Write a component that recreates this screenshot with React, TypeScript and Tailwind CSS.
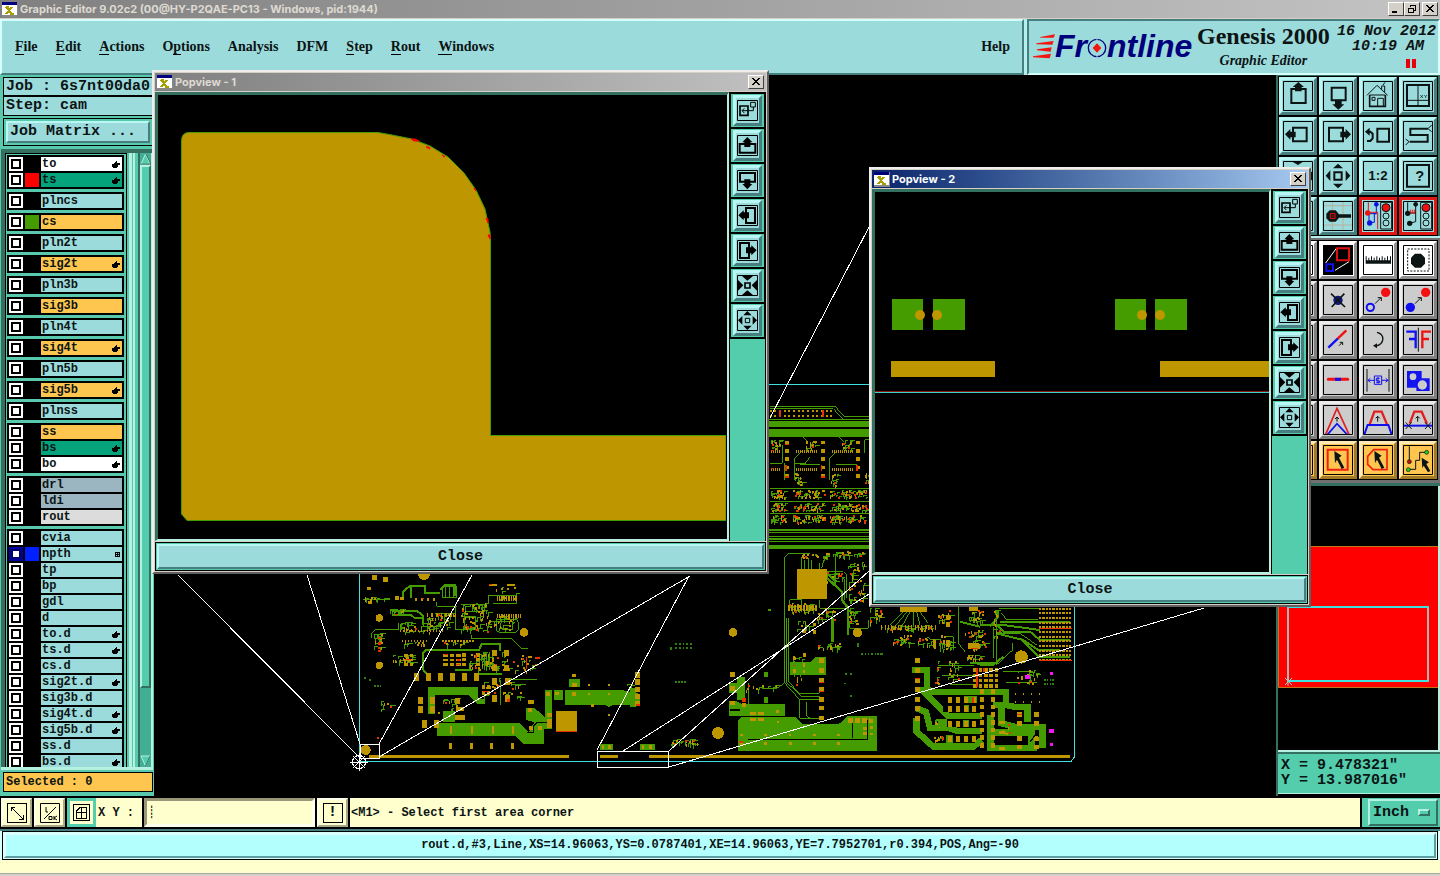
import React, { ReactNode } from "react";

const MONO = "font-['Liberation_Mono',monospace]";
const SERIF = "font-['Liberation_Serif',serif]";
const GREEN = "#459c00";
const GOLD = "#bd9600";
const AQUA = "bg-[#9cdbdc] border-t-[#b9f7f4] border-l-[#b9f7f4] border-b-[#477f80] border-r-[#477f80]";

/* ---------- title bars ---------- */

function AppIcon() {
  return (
    <svg className="h-4 w-4 shrink-0" viewBox="0 0 16 16" shapeRendering="crispEdges">
      <rect width="16" height="15" y="1" fill="#888" />
      <rect width="15" height="13" y="1" fill="#fff" />
      <rect width="15" height="3" y="1" fill="#00007c" />
      <path d="M4 6l6 7M10 6l-6 7M4 6h3M8 13h4" stroke="#a8a000" strokeWidth="2" />
    </svg>
  );
}

function WinButton({ label, children }: { label: string; children: ReactNode }) {
  return (
    <button
      type="button"
      aria-label={label}
      className="flex h-[14px] w-4 items-center justify-center border border-t-white border-l-white border-r-[#404040] border-b-[#404040] bg-[#d4d0c8]"
    >
      <svg className="h-[10px] w-[12px]" viewBox="0 0 12 10" fill="none" stroke="#000" shapeRendering="crispEdges">
        {children}
      </svg>
    </button>
  );
}

const CloseGlyph = <path d="M2 1l7 7M3 1l7 7M9 1l-7 7M10 1l-7 7" />;

/* ---------- header ---------- */

const MENUS: [string, string, string][] = [
  ["", "F", "ile"],
  ["", "E", "dit"],
  ["", "A", "ctions"],
  ["O", "p", "tions"],
  ["Analysis", "", ""],
  ["DFM", "", ""],
  ["", "S", "tep"],
  ["", "R", "out"],
  ["", "W", "indows"],
];

function Header() {
  return (
    <header className="flex h-14 bg-[#b5f0ee]">
      <nav
        className={`${SERIF} flex flex-1 items-center gap-[18px] border-2 border-t-[#d5fffb] border-l-[#d5fffb] border-r-[#477f80] border-b-[#477f80] bg-[#9cdbdc] pr-3 pl-[13px] text-[14px] font-bold`}
      >
        {MENUS.map(([a, b, c]) => (
          <button type="button" key={a + b + c} className="leading-5">
            {a}
            <span className="border-b border-black">{b}</span>
            {c}
          </button>
        ))}
        <button type="button" className="ml-auto leading-5">
          Help
        </button>
      </nav>
      <div className="ml-[3px] flex w-[413px] border-2 border-t-[#477f80] border-l-[#477f80] border-r-[#d5fffb] border-b-[#d5fffb] bg-[#9cdbdc] pl-1">
        <div className="flex h-[50px] items-center">
          <svg className="h-[26px] w-[22px]" viewBox="0 0 66 78" fill="#f4160e">
            <path d="M22 12L66 4 62 14 22 14ZM10 31L62 24 58 35 10 34ZM12 49L56 43 53 56 12 52ZM0 70L54 62 50 76 0 73Z" />
          </svg>
          <div className="flex items-baseline font-['Liberation_Sans',sans-serif] text-[32px] leading-[50px] font-bold text-[#00007c] italic">
            Fr
            <svg className="-mb-[2px] h-[22px] w-5 self-center" viewBox="0 0 60 66" role="img" aria-label="o">
              <circle cx="30" cy="36" r="26" fill="none" stroke="#00007c" strokeWidth="4" />
              <path d="M30 22L43 36 30 50 17 36Z" fill="#f4160e" />
              <path d="M30 4v12M30 56v10" stroke="#9cdbdc" strokeWidth="3" />
            </svg>
            ntline
          </div>
        </div>
        <div className={`${SERIF} ml-px flex w-[140px] flex-col items-center font-bold`}>
          <span className="text-[24px] leading-[30px] whitespace-nowrap">Genesis 2000</span>
          <span className="mt-[2px] text-[14px] leading-4 italic">Graphic Editor</span>
        </div>
        <div className={`${MONO} flex-1 pt-[3px] pr-[2px] text-right text-[15px] leading-[15px] font-bold whitespace-nowrap italic`}>
          <div>16 Nov 2012</div>
          <div className="pr-3">10:19 AM</div>
          <div className="mt-[5px] flex justify-end gap-[2px] pr-5">
            <span className="h-[9px] w-[4px] bg-red-600" />
            <span className="h-[9px] w-[4px] bg-red-600" />
          </div>
        </div>
      </div>
    </header>
  );
}

/* ---------- layer list ---------- */

type Layer = { name: string; bg?: string; swatch?: string; mark?: "hand" | "grid"; on?: boolean };
const ORANGE = "bg-[#fec64f]";
const LAYERS: Layer[][] = [
  [
    { name: "to", bg: "bg-white", mark: "hand" },
    { name: "ts", bg: "bg-[#05a37c]", swatch: "bg-[#ff0000]", mark: "hand" },
  ],
  [{ name: "plncs" }],
  [{ name: "cs", bg: ORANGE, swatch: "bg-[#459c00]" }],
  [{ name: "pln2t" }],
  [{ name: "sig2t", bg: ORANGE, mark: "hand" }],
  [{ name: "pln3b" }],
  [{ name: "sig3b", bg: ORANGE }],
  [{ name: "pln4t" }],
  [{ name: "sig4t", bg: ORANGE, mark: "hand" }],
  [{ name: "pln5b" }],
  [{ name: "sig5b", bg: ORANGE, mark: "hand" }],
  [{ name: "plnss" }],
  [
    { name: "ss", bg: ORANGE },
    { name: "bs", bg: "bg-[#05a37c]", mark: "hand" },
    { name: "bo", bg: "bg-white", mark: "hand" },
  ],
  [
    { name: "drl", bg: "bg-[#9bb6c0]" },
    { name: "ldi", bg: "bg-[#9bb6c0]" },
    { name: "rout", bg: "bg-[#dcdcdc]" },
  ],
  [
    { name: "cvia" },
    { name: "npth", swatch: "bg-[#0020ff]", mark: "grid", on: true },
    { name: "tp" },
    { name: "bp" },
    { name: "gdl" },
    { name: "d" },
    { name: "to.d", mark: "hand" },
    { name: "ts.d", mark: "hand" },
    { name: "cs.d" },
    { name: "sig2t.d", mark: "hand" },
    { name: "sig3b.d" },
    { name: "sig4t.d", mark: "hand" },
    { name: "sig5b.d", mark: "hand" },
    { name: "ss.d" },
    { name: "bs.d", mark: "hand" },
  ],
];

function LayerRow({ l }: { l: Layer }) {
  const id = "layer-" + l.name;
  return (
    <div className="flex h-[14px] gap-[2px]">
      <input
        id={id}
        type="checkbox"
        className={`h-[14px] w-[14px] shrink-0 appearance-none outline-2 -outline-offset-4 ${
          l.on ? "border-4 border-[#0000a0] bg-white outline-[#000070]" : "bg-white outline-black"
        }`}
      />
      <span className={`w-[14px] shrink-0 ${l.swatch ?? "bg-black"}`} />
      <label
        htmlFor={id}
        className={`${MONO} flex flex-1 items-center justify-between pr-[2px] pl-[1px] text-[12px] leading-[14px] font-bold ${l.bg ?? "bg-[#9cdbdc]"}`}
      >
        {l.name}
        {l.mark === "hand" && (
          <svg className="mt-[2px] h-2 w-2" viewBox="0 0 8 8" shapeRendering="crispEdges">
            <path d="M4 0h1v2h3v2h-2v2h-1v1h-4v-1h-1v-3h2v-1h1v-1h1z" />
          </svg>
        )}
        {l.mark === "grid" && (
          <svg className="h-[5px] w-[5px]" viewBox="0 0 5 5" fill="none" stroke="#000" shapeRendering="crispEdges">
            <path d="M.5 .5h4v4h-4zM2.5 0v5M0 2.5h5" />
          </svg>
        )}
      </label>
    </div>
  );
}

function Sidebar() {
  return (
    <aside className="flex w-[154px] shrink-0 flex-col border-x border-[#58c9ac] bg-[#58c9ac] pt-[2px]">
      <div className={`${MONO} ml-[2px] border border-black bg-[#9cdbdc] text-[15px] leading-[18px] font-bold whitespace-nowrap`}>
        <div className="h-[19px] overflow-hidden border-b-2 border-black pl-[2px]">Job : 6s7nt00da0</div>
        <div className="h-[18px] pl-[2px]">Step: cam</div>
      </div>
      <div className="mt-[2px] ml-[2px] flex border border-black p-[2px]">
        <button type="button" className={`${MONO} ${AQUA} h-[22px] w-full border-2 pl-[2px] text-left text-[15px] leading-4 font-bold`}>
          Job Matrix ...
        </button>
      </div>
      <div className="mt-[3px] flex h-[618px] border-t-4 border-[#33705f]">
        <div className="w-[126px] overflow-hidden border-l-4 border-[#33705f]">
          <div className="h-full overflow-hidden border border-b-0 border-black bg-[#58c9ac] pt-px pr-[2px] pl-px">
            <div className="flex flex-col gap-[3px]">
              {LAYERS.map((g) => (
                <div key={g[0].name} className="flex flex-col gap-[2px] bg-black p-[2px]">
                  {g.map((l) => (
                    <LayerRow key={l.name} l={l} />
                  ))}
                </div>
              ))}
            </div>
          </div>
        </div>
        <div className="ml-[2px] w-[3px] bg-[#b5f0e0]" />
        <div className="ml-[1px] w-[2px] bg-[#b5f0e0]" />
        <div className="ml-[3px] flex flex-1 flex-col border-l-2 border-r-2 border-l-[#33705f] border-r-[#b5f0e0] bg-[#42ae94]">
          <svg className="h-3 w-[11px]" viewBox="0 0 11 12">
            <path d="M5.500 1L10 11H1Z" fill="#53cdac" stroke="#b5f0e0" />
            <path d="M6 1l5 10H1" stroke="#33705f" fill="none" />
          </svg>
          <div className="h-[523px] border-2 border-t-[#b5f0e0] border-l-[#b5f0e0] border-r-[#33705f] border-b-[#33705f] bg-[#53cdac]" />
          <svg className="mt-auto h-3 w-[11px]" viewBox="0 0 11 12">
            <path d="M1 1H10L5.500 11Z" fill="#53cdac" stroke="#b5f0e0" />
            <path d="M10 1L5.500 11" stroke="#33705f" fill="none" />
          </svg>
        </div>
      </div>
      <div className="h-[3px] bg-[#b5f0e0]" />
      <div className={`${MONO} mt-[2px] ml-[2px] h-5 border border-black bg-[#fec64f] pl-[2px] text-[12px] leading-[18px] font-bold`}>
        Selected : 0
      </div>
    </aside>
  );
}

/* ---------- board drawing ---------- */

type Region = [x: number, y: number, w: number, h: number, n: number];

function makeRandom(seed: number) {
  let s = seed;
  return () => {
    s = (s * 1103515245 + 12345) % 2147483648;
    return s / 2147483648;
  };
}

/* Small pads and stub traces on a three-unit grid. */
function Scatter({ seed, regions, red = 0.12, stub = 5 }: { seed: number; regions: Region[]; red?: number; stub?: number }) {
  const rnd = makeRandom(seed);
  let g = "";
  let a = "";
  let r = "";
  for (const [x, y, w, h, n] of regions) {
    for (let i = 0; i < n; i++) {
      const px = x + Math.floor((rnd() * w) / 3) * 3;
      const py = y + Math.floor((rnd() * h) / 3) * 3;
      const k = rnd();
      if (k < 0.48) {
        const lx = 6 + Math.floor(rnd() * stub) * 3;
        const ly = 3 + Math.floor(rnd() * (stub - 1)) * 3;
        g += `M${px} ${py}h${lx}v3h${-(lx - 3)}v${ly}h-3z`;
      } else if (k < 1 - red) {
        const pw = rnd() < 0.5 ? 3 : 6;
        a += `M${px} ${py}h${pw}v${pw === 3 ? 9 : 6}h${-pw}z`;
      } else {
        r += `M${px} ${py}h6v6h-6z`;
      }
    }
  }
  return (
    <>
      <path d={g} fill={GREEN} />
      <path d={a} fill={GOLD} />
      <path d={r} fill="#e03800" />
    </>
  );
}

type Pad = [x: number, y: number, w: number, h: number];
function Pads({ list, fill = GOLD }: { list: Pad[]; fill?: string }) {
  return <path fill={fill} d={list.map(([x, y, w, h]) => `M${x} ${y}h${w}v${h}h${-w}z`).join("")} />;
}
function grid(x: number, y: number, nx: number, ny: number, dx: number, dy: number, w: number, h: number): Pad[] {
  const out: Pad[] = [];
  for (let j = 0; j < ny; j++) for (let i = 0; i < nx; i++) out.push([x + i * dx, y + j * dy, w, h]);
  return out;
}
function Holes({ list, fill = GOLD }: { list: [number, number, number][]; fill?: string }) {
  return (
    <g fill={fill}>
      {list.map(([x, y, r]) => (
        <circle key={x + "-" + y} cx={x} cy={y} r={r} />
      ))}
    </g>
  );
}

function LowerLeft() {
  return (
    <g transform="translate(355 570) scale(0.33333)">
      <g fill="none" stroke={GREEN} strokeWidth="6">
        <path d="M145 82V64L165 48H210V70H256M168 50V84M256 60L270 46H300V78M110 122H185L205 138V165M110 136H170L180 145H200" />
        <path d="M204 300V250L214 240H372L380 222H436V244M300 300H345V285M205 300L222 320M372 312H440" />
      </g>
      <g fill="none" stroke={GREEN} strokeWidth="3">
        <path d="M50 205V188L62 179H132V160M245 95V109H305M302 105V180H320M350 195V206H470L500 236H520M25 88H105M318 105H390V125H330V178H362V140H318M400 100V78H486V102H415M424 145V180L434 189H480L492 178V160L484 148H424M434 156H474V178H440Z" />
        <path d="M262 50H306V82H262ZM272 50V80M284 50V80M296 50V80M240 132H300M252 132V150M270 132V152M288 132V150M330 142H362V176H330Z" />
        <path d="M436 330V405M450 330H545M470 345H512M388 250V300M396 246V304M404 246V300M412 250V300" />
      </g>
      <Scatter
        seed={11}
        red={0.05}
        regions={[
          [318, 100, 90, 85, 84],
          [418, 135, 65, 50, 24],
          [420, 50, 65, 40, 12],
          [135, 155, 110, 35, 34],
          [105, 115, 50, 20, 10],
          [140, 215, 80, 8, 10],
          [260, 215, 80, 8, 10],
          [110, 255, 70, 25, 24],
          [330, 245, 130, 55, 66],
          [475, 255, 60, 50, 18],
          [380, 325, 115, 60, 28],
          [245, 378, 70, 70, 20],
          [25, 80, 68, 9, 12],
          [58, 190, 26, 45, 20],
          [75, 390, 35, 30, 8],
          [800, 340, 30, 70, 10],
          [215, 130, 80, 45, 34],
        ]}
      />
      <g fill={GREEN}>
        <path d="M218 350H370V384L390 388V402H366L340 376H240V432H218Z" />
        <path d="M245 460H495L522 487L538 456 513 450V413H538L568 440H592V478H567V521H505L480 498H245Z" />
        <path d="M571 360H591V440H571ZM597 360H625V390H597ZM630 360H800L855 372V405H775L762 411 750 405H630ZM642 327H676V352H642ZM265 424H300V456H265ZM255 470H300V480H255Z" />
        <path d="M736 522H774V539H736ZM855 522H900V539H855Z" />
      </g>
      <path d="M515 487H535V468L545 458H575" fill="none" stroke="#000" strokeWidth="4" />
      <Pads
        list={[
          ...grid(214, 310, 5, 1, 36, 0, 14, 24),
          [178, 310, 14, 22],
          [136, 82, 12, 8],
          ...grid(180, 84, 4, 1, 18, 0, 6, 8),
          ...grid(425, 78, 9, 1, 7, 0, 4, 14),
          ...grid(425, 132, 11, 1, 7, 0, 4, 12),
          ...grid(215, 128, 7, 1, 14, 0, 5, 14),
          ...grid(135, 180, 15, 1, 9, 0, 4, 7),
          ...grid(140, 210, 9, 1, 9, 0, 4, 6),
          ...grid(262, 210, 11, 1, 9, 0, 4, 6),
          ...grid(264, 252, 3, 3, 20, 14, 14, 8),
          ...grid(148, 252, 2, 3, 16, 14, 10, 8),
          ...grid(320, 250, 2, 3, 42, 14, 12, 10),
          ...grid(382, 344, 2, 2, 15, 18, 9, 12),
          ...grid(412, 240, 2, 2, 36, 45, 14, 18),
          ...grid(410, 324, 2, 2, 40, 52, 16, 20),
          [190, 380, 14, 22], [190, 408, 14, 22], [225, 382, 14, 20], [225, 408, 14, 22],
          [202, 450, 13, 24], [238, 449, 14, 24], [300, 385, 14, 16], [300, 436, 30, 14], [302, 410, 24, 14],
          ...grid(286, 467, 4, 1, 62, 0, 6, 24),
          ...grid(282, 520, 4, 1, 62, 0, 9, 18),
          [401, 42, 26, 6], [455, 42, 26, 6], [120, 77, 12, 12], [50, 16, 15, 13], [84, 22, 15, 13],
          [603, 423, 63, 62], [519, 413, 12, 12], [574, 366, 12, 12], [601, 366, 10, 10], [650, 340, 16, 12], [652, 366, 12, 12],
          [698, 342, 6, 6], [698, 368, 6, 6], [759, 342, 6, 6], [759, 368, 6, 6], [759, 432, 6, 6], [709, 402, 8, 10],
          [576, 430, 16, 12], [576, 447, 16, 28], [522, 467, 12, 12], [549, 467, 12, 12],
          ...grid(840, 308, 1, 5, 0, 21, 15, 15),
          [740, 524, 8, 12], [760, 524, 8, 12], [860, 524, 8, 12], [882, 524, 8, 12],
          [519, 390, 17, 11], [652, 312, 10, 8], [36, 50, 12, 9], [40, 92, 10, 9],
          [735, 555, 54, 9], [882, 555, 20, 9],
        ]}
      />
      <Pads
        fill="#e83000"
        list={[
          [603, 482, 63, 3], [65, 500, 8, 8], [70, 200, 8, 8], [70, 216, 8, 8], [70, 240, 8, 6],
          [149, 266, 18, 5], [266, 252, 12, 4], [305, 266, 10, 6], [302, 282, 12, 4], [360, 254, 6, 10],
          [512, 262, 4, 36], [540, 262, 14, 4], [540, 282, 12, 4], [385, 362, 14, 4], [455, 388, 10, 8],
          [120, 132, 10, 4], [842, 402, 12, 5], [250, 132, 6, 6], [402, 42, 10, 3], [200, 84, 6, 4],
        ]}
      />
      <Holes list={[[73, 144, 11], [73, 286, 11], [507, 187, 13], [207, 12, 18], [32, 540, 15]]} />
      <Pads fill="#387818" list={[[27, 322, 5, 5], [42, 328, 5, 5], [58, 346, 5, 5], [66, 346, 5, 5], [74, 346, 5, 5]]} />
    </g>
  );
}

function MiddleBoard() {
  return (
    <g transform="translate(630 540) scale(0.33333)">
      <g fill="none" stroke={GREEN} strokeWidth="3">
        <path d="M540 42H474L465 50V430L510 480H570M470 235V428L508 462H565L580 448M477 235V425L515 470H570M510 480V535H570M530 485V528L540 535" />
        <path d="M515 50V86M525 60V86M535 55V86M545 60V86M570 70V86M582 60L575 84M616 45V120M590 95H640L650 105V175M592 105H630L645 120V180M480 200V180H500L515 178V215M570 180V205H650M395 445H440L462 430M660 265H715V240M355 430V500" />
      </g>
      <g fill="none" stroke={GREEN} strokeWidth="7">
        <path d="M592 115L636 155V180L655 205V285M608 235V305M590 100L620 125" />
      </g>
      <Scatter
        seed={23}
        red={0.12}
        regions={[
          [515, 38, 80, 15, 20],
          [610, 32, 90, 14, 24],
          [475, 190, 85, 30, 36],
          [590, 95, 50, 30, 16],
          [560, 205, 60, 40, 24],
          [655, 65, 50, 120, 48],
          [655, 205, 30, 50, 20],
          [565, 305, 70, 20, 20],
          [500, 240, 50, 30, 8],
          [345, 432, 100, 20, 12],
          [122, 598, 80, 18, 26],
          [485, 345, 40, 90, 16],
          [660, 560, 50, 25, 6],
        ]}
      />
      <g fill={GREEN}>
        <path d="M480 366H540L556 352H588V404H480ZM297 484H320L335 492H465V528H297ZM320 410H345V480H320ZM297 430H320V460H297Z" />
        <path d="M334 531H495L515 551H628L652 528H741V633H324V540Z" />
        <path d="M402 396H414V410H402ZM402 471H414V488H402ZM30 612H72V629H30ZM0 445H18V500H0ZM414 207H423V213H414Z" />
      </g>
      <path d="M355 598H712V540M668 545V595M330 510H300" fill="none" stroke="#000" strokeWidth="4" />
      <Pads fill="#308010" list={[...grid(136, 310, 5, 2, 11, 12, 5, 5), ...grid(136, 424, 4, 1, 9, 0, 5, 4), ...grid(694, 340, 7, 1, 10, 0, 4, 4), [120, 320, 5, 10], [646, 400, 6, 5], [660, 400, 6, 5], [643, 428, 6, 5], [660, 466, 6, 5], [680, 310, 6, 10]]} />
      <Pads
        list={[
          [501, 87, 90, 90],
          [567, 353, 15, 15], [567, 383, 15, 15], [567, 413, 15, 15], [567, 440, 15, 15], [567, 471, 15, 15], [567, 498, 15, 13], [567, 528, 15, 13],
          [300, 396, 15, 14], [300, 438, 15, 14], [300, 482, 15, 14], [337, 490, 10, 12],
          [360, 515, 18, 10], [385, 515, 18, 10], [360, 534, 18, 10], [385, 534, 18, 10], [438, 510, 9, 9], [440, 543, 7, 6],
          ...grid(330, 581, 5, 1, 73, 0, 8, 7),
          ...grid(330, 606, 5, 1, 73, 0, 9, 9),
          ...grid(654, 534, 4, 1, 21, 0, 14, 15),
          ...grid(700, 562, 2, 2, 20, 15, 11, 9),
          [519, 340, 8, 10], [488, 350, 10, 10], [519, 370, 6, 10], [519, 390, 6, 10], [489, 388, 8, 10], [516, 268, 12, 10], [548, 248, 10, 10], [548, 270, 10, 12],
          ...grid(15, 396, 1, 5, 0, 22, 15, 14),
          ...grid(475, 196, 10, 1, 9, 0, 4, 16),
        ]}
      />
      <Pads fill="#e83000" list={[[336, 475, 11, 10], [568, 425, 13, 3], [568, 453, 13, 3], [328, 604, 12, 4], [488, 375, 8, 4], [15, 490, 15, 5]]} />
      <Holes list={[[309, 277, 13], [682, 278, 14], [264, 579, 18]]} />
    </g>
  );
}

function RightBoard() {
  return (
    <g transform="translate(870 590) scale(0.33333)">
      <g fill="none" stroke={GREEN} strokeWidth="3">
        <path d="M265 52V160L285 185M380 60V225M372 110V205M388 55H510M395 70L410 90H505M385 130H450L500 165M428 160V180L385 220M400 245H490V262M408 278H500M205 228H312M215 257H310M240 285H310M330 228H372" />
        <path d="M100 66L60 105M110 66L75 110M120 66L95 110M130 66V110M140 66L150 105M150 66L175 100M170 140L185 150H212V185M228 140H250V180" />
      </g>
      <g fill="none" stroke={GREEN} strokeWidth="6">
        <path d="M330 105H400L510 120M390 95H600M380 130L460 150L505 180H570M360 110L385 80V60M270 95L330 110M320 222H372L400 200M385 110L400 125H480L510 150H600M300 218H385M450 145L505 200H600" />
      </g>
      <g fill="none" stroke={GREEN} strokeWidth="19">
        <path d="M127 240H172V298L190 307H408V345L440 352H473V395" />
        <path d="M140 300H155L235 378H335M140 355L168 366 180 415H240L262 423H335M140 385V425L190 470H310L335 450M368 345H395V400L440 412H518V474M362 375V474H500M368 428H485V470" />
      </g>
      <Scatter
        seed={37}
        red={0.08}
        regions={[
          [0, 52, 36, 55, 20],
          [32, 104, 155, 16, 44],
          [62, 135, 60, 28, 22],
          [145, 145, 50, 30, 18],
          [205, 135, 40, 45, 18],
          [200, 60, 45, 40, 14],
          [290, 55, 50, 40, 24],
          [285, 120, 60, 20, 20],
          [285, 195, 50, 15, 20],
          [300, 150, 50, 30, 20],
          [195, 210, 12, 70, 10],
          [230, 210, 36, 70, 18],
          [190, 388, 30, 20, 12],
          [190, 435, 30, 18, 12],
          [430, 240, 75, 40, 20],
          [370, 60, 20, 80, 14],
          [395, 385, 24, 70, 8],
        ]}
      />
      <Pads fill="#000" list={[[220, 325, 100, 42], [222, 390, 94, 22], [222, 436, 94, 22]]} />
      <Pads
        fill={GREEN}
        list={[[282, 318, 40, 22], [282, 345, 14, 22], [205, 388, 25, 22], [228, 435, 20, 26], [278, 390, 18, 20]]}
      />
      <Pads
        list={[
          [90, 52, 80, 14],
          ...grid(507, 53, 10, 12, 10, 14, 7, 6),
          ...grid(310, 235, 5, 4, 16, 16, 11, 10),
          ...grid(330, 298, 2, 8, 32, 23, 12, 14),
          ...grid(234, 322, 4, 1, 24, 0, 11, 16),
          ...grid(234, 348, 4, 1, 24, 0, 11, 17),
          ...grid(234, 392, 4, 1, 24, 0, 11, 18),
          ...grid(234, 438, 4, 1, 24, 0, 11, 18),
          [135, 205, 15, 13], [135, 234, 15, 14], [135, 264, 15, 14], [135, 290, 15, 15], [135, 322, 15, 13], [135, 348, 15, 14], [135, 377, 15, 15],
          [441, 366, 15, 14], [492, 366, 15, 14], [441, 393, 15, 14], [492, 393, 15, 14], [441, 438, 15, 14], [492, 438, 15, 14], [441, 464, 15, 12], [492, 464, 15, 14],
          [388, 392, 18, 10], [388, 422, 18, 10], [388, 470, 18, 9],
          ...grid(434, 308, 4, 2, 24, 25, 5, 6),
          ...grid(34, 104, 17, 1, 10, 0, 3, 16),
          [228, 75, 11, 14], [228, 97, 11, 14], [203, 75, 8, 10], [229, 150, 10, 22], [190, 150, 8, 22],
          [295, 158, 32, 20], [296, 52, 28, 12],
        ]}
      />
      <path d="M480 455L505 425V440" stroke="#000" strokeWidth="4" fill="none" />
      <Pads fill={GREEN} list={[[0, 380, 20, 102]]} />
      <Pads fill={GOLD} list={[[0, 386, 10, 12], [0, 408, 9, 9], [0, 430, 9, 5]]} />
      <Pads fill="#308010" list={[...grid(523, 268, 4, 2, 8, 12, 4, 4), ...grid(6, 190, 4, 1, 8, 0, 4, 4)]} />
      <Pads fill="#e83000" list={[[318, 235, 5, 55], [340, 235, 5, 10], [508, 114, 98, 4], [508, 210, 98, 3], [135, 264, 15, 3], [306, 320, 6, 18], [302, 174, 22, 4], [78, 152, 8, 8], [146, 148, 8, 8], [30, 60, 6, 10], [441, 372, 15, 2]]} />
      <Holes list={[[454, 201, 20]]} />
      <Pads fill="#f318f3" list={[[466, 256, 15, 12], [540, 246, 9, 9], [538, 417, 14, 13], [540, 459, 9, 9]]} />
    </g>
  );
}

const BAND_ROWS = [361, 399, 436];

function UpperBoard() {
  return (
    <g transform="translate(765 370) scale(0.33333)">
      <g fill={GREEN}>
        <path d="M0 153H320V171H0ZM0 178H320V201H0ZM0 525H320V537H0ZM0 477H320V483H0ZM0 487H320V490H0ZM0 497H320V501H0ZM0 505H320V509H0ZM0 513H320V517H0Z" />
      </g>
      <g fill="none" stroke={GREEN} strokeWidth="3">
        <path d="M15 109H210L240 141H320M15 116H205L235 148H320M0 148H235M15 357H320M15 395H320M15 430H320M60 280V330M52 225V280H15M112 200L128 215M220 200L236 215M88 330V265L110 245M106 285H165M195 330V265L215 245M213 285H275M300 250V210H320M90 282H120L135 260" />
      </g>
      <Scatter
        seed={51}
        red={0.05}
        stub={4}
        regions={[
          [15, 210, 30, 28, 16],
          [122, 210, 30, 28, 16],
          [232, 210, 30, 28, 16],
          [90, 310, 24, 40, 16],
          [195, 310, 24, 40, 16],
          [300, 310, 12, 40, 7],
        ]}
      />
      <Scatter
        seed={77}
        red={0.16}
        stub={3}
        regions={BAND_ROWS.flatMap((y): Region[] => [
          [18, y, 45, 24, 26],
          [85, y, 95, 24, 48],
          [195, y, 112, 24, 54],
        ])}
      />
      <Pads
        list={[
          ...grid(42, 121, 12, 2, 14, 13, 6, 6),
          [16, 121, 6, 6], [28, 121, 6, 6], [16, 134, 6, 6], [28, 134, 6, 6],
          ...grid(18, 240, 5, 1, 6, 0, 3, 8), ...grid(92, 240, 11, 1, 6, 0, 3, 8), ...grid(200, 240, 11, 1, 6, 0, 3, 8),
          ...grid(18, 294, 5, 1, 6, 0, 3, 8), ...grid(92, 294, 11, 1, 6, 0, 3, 8), ...grid(200, 294, 11, 1, 6, 0, 3, 8),
          ...grid(60, 212, 3, 5, 107, 25, 12, 11),
        ]}
      />
      <Pads fill="#e83000" list={[[42, 120, 6, 20], [170, 120, 6, 20], [60, 222, 12, 4], [60, 286, 5, 18], [167, 286, 5, 18], [274, 286, 5, 18], [60, 318, 12, 5], [167, 318, 12, 5], [18, 240, 10, 4], [18, 294, 8, 4]]} />
    </g>
  );
}

function Board() {
  return (
    <svg className="h-[721px] w-[1122px]" viewBox="154 75 1122 721" shapeRendering="crispEdges" role="img" aria-label="Board layout">
      <UpperBoard />
      <MiddleBoard />
      <LowerLeft />
      <RightBoard />
      <path d="M369 755H569V758H369ZM649 755H1070V758H649Z" fill={GOLD} />
      <path d="M359.500 384.500H1074.500V757L1071 761.500H359.500Z" fill="none" stroke="#3fe0e0" />
      <g fill="none" stroke="#fff">
        <path d="M178 575L359 757M307 575L360 744M472 575L379 744M690 576L379 757M689 576L597 750M869 571L669 751M869 594L623 751M669 767L1204 608M869 227L770 418" />
        <path d="M360.500 744.500H379.500V758.500H360.500ZM597.500 751.500H668.500V767.500H597.500Z" />
        <circle cx="359" cy="762" r="6.500" />
        <path d="M350 762H368M359 753V771M353 756L365 768M365 756L353 768" />
      </g>
    </svg>
  );
}

/* ---------- toolbar icons, drawn on a 90-unit square ---------- */

const K = "#0c1414";
const tri = {
  up: "M29 18L46 3 63 18H56V31H36V18Z",
  down: "M28 70L46 86 64 70H56V56H36V70Z",
};

function TrafficLight() {
  return (
    <g strokeWidth="3">
      <path d="M53 4H86V84H53Z" stroke={K} fill="none" />
      <circle cx="69" cy="20" r="12" fill="#f01010" stroke={K} />
      <circle cx="69" cy="45" r="9" stroke={K} fill="none" />
      <circle cx="69" cy="66" r="9" stroke={K} fill="none" />
    </g>
  );
}

type Tool = { label: string; tone: "aqua" | "alert" | "white" | "grey" | "orange"; art: ReactNode };

const NAV_TOOLS: Tool[] = [
  { label: "Scroll up", tone: "aqua", art: <><path d="M25 24H68V66H25Z" stroke={K} strokeWidth="6" /><path d={tri.up} fill={K} /></> },
  { label: "Scroll down", tone: "aqua", art: <><path d="M26 20H68V58H26Z" stroke={K} strokeWidth="6" /><path d={tri.down} fill={K} /></> },
  {
    label: "Home",
    tone: "aqua",
    art: (
      <>
        <path d="M20 42V76H67V42" stroke={K} strokeWidth="5" />
        <path d="M12 43L42 13 74 43M20 42H67M44 76V52H61V76M27 49H36V58H27ZM56 25V15H65V33M60 12L66 4" stroke={K} strokeWidth="3" />
      </>
    ),
  },
  {
    label: "XY window",
    tone: "aqua",
    art: (
      <>
        <path d="M12 12H78V75H12Z" stroke={K} strokeWidth="6" />
        <path d="M45 10V74M11 58H78" stroke={K} strokeWidth="3" />
        <path d="M52 42L60 51M60 42L52 51M64 42L68 47 72 42M68 47V51" stroke={K} strokeWidth="2" />
      </>
    ),
  },
  { label: "Scroll left", tone: "aqua", art: <><path d="M30 20H71V61H30Z" stroke={K} strokeWidth="6" /><path d="M6 40L22 24V32H38V49H22V56Z" fill={K} /></> },
  { label: "Scroll right", tone: "aqua", art: <><path d="M18 20H60V61H18Z" stroke={K} strokeWidth="6" /><path d="M84 40L68 24V32H52V49H68V56Z" fill={K} /></> },
  {
    label: "Previous view",
    tone: "aqua",
    art: (
      <>
        <path d="M43 23H78V62H43Z" stroke={K} strokeWidth="6" />
        <path d="M12 60H22L29 52V38L22 32H14" stroke={K} strokeWidth="6" />
        <path d="M6 32L20 20V44Z" fill={K} />
      </>
    ),
  },
  {
    label: "Serpentine",
    tone: "aqua",
    art: (
      <>
        <path d="M76 23H22V42H74V62H20" stroke={K} strokeWidth="6" />
        <path d="M76 22L86 12M76 24L86 32M18 62L8 54M18 62L8 72" stroke={K} strokeWidth="3" />
      </>
    ),
  },
  { label: "Zoom in", tone: "aqua", art: <path d="M28 2H60L45 12ZM2 30L16 45 2 60ZM88 30L74 45 88 60ZM30 88L45 74 60 88Z" fill={K} /> },
  {
    label: "Zoom out",
    tone: "aqua",
    art: (
      <>
        <path d="M34 34H56V56H34Z" stroke={K} strokeWidth="6" />
        <path d="M30 22L45 8 60 22ZM30 68L45 82 60 68ZM22 28V60L8 44ZM68 28V60L82 44Z" fill={K} />
      </>
    ),
  },
  {
    label: "Zoom 1:2",
    tone: "aqua",
    art: (
      <text x="45" y="58" textAnchor="middle" fill={K} fontFamily="Liberation Sans, sans-serif" fontWeight="bold" fontSize="40">
        1:2
      </text>
    ),
  },
  {
    label: "Query",
    tone: "aqua",
    art: (
      <>
        <path d="M12 12H78V77H12Z" stroke={K} strokeWidth="6" />
        <text x="50" y="60" textAnchor="middle" fill={K} fontFamily="Liberation Sans, sans-serif" fontWeight="bold" fontSize="44">
          ?
        </text>
      </>
    ),
  },
  { label: "Snap", tone: "aqua", art: <path d="M20 45H70M45 20V70" stroke={K} strokeWidth="5" /> },
  {
    label: "Measure feature",
    tone: "aqua",
    art: (
      <>
        <path d="M2 14H88M2 72H88M28 2V88M60 2V88" stroke="#b8b0a0" strokeWidth="3" />
        <path d="M20 28H38L48 40H84V50H48L38 62H20L10 52V38Z" fill={K} />
        <path d="M22 38H36V52H22Z" stroke="#f01010" strokeWidth="3" />
        <path d="M28 43H31V47H28Z" fill="#f01010" />
      </>
    ),
  },
  {
    label: "Net analyzer on",
    tone: "alert",
    art: (
      <>
        <path d="M40 10V38H18V60M40 38H34V64H18" stroke="#1010e0" strokeWidth="3" />
        <path d="M16 4V34H44V84" stroke="#f01010" strokeWidth="3" />
        <circle cx="40" cy="10" r="7" fill="#1010e0" />
        <circle cx="14" cy="36" r="8" fill="#f01010" />
        <circle cx="20" cy="66" r="8" fill="#1010e0" />
        <TrafficLight />
      </>
    ),
  },
  {
    label: "Net analyzer off",
    tone: "alert",
    art: (
      <>
        <path d="M38 10V62L22 66M38 36H14V4" stroke={K} strokeWidth="3" />
        <path d="M22 26V36M28 26V36M34 26V36M20 36H36" stroke="#f01010" strokeWidth="3" />
        <circle cx="38" cy="10" r="7" fill={K} />
        <circle cx="14" cy="37" r="8" fill={K} />
        <circle cx="20" cy="67" r="8" fill={K} />
        <TrafficLight />
      </>
    ),
  },
];

const cursor = "M34 18L56 32 48 38 64 68 56 72 42 44 36 54Z";
const blank = (label: string, tone: Tool["tone"]): Tool => ({ label, tone, art: <path d="M20 70L70 20" stroke={K} strokeWidth="4" /> });

const EDIT_TOOLS: Tool[] = [
  blank("Pointer", "white"),
  {
    label: "Popview",
    tone: "white",
    art: (
      <>
        <path d="M0 0H90V90H0Z" fill="#000" />
        <path d="M40 10L8 54M36 76L78 50" stroke="#fff" strokeWidth="3" />
        <path d="M42 10H78V46H42Z" stroke="#e01010" strokeWidth="6" />
        <path d="M10 58H30V78H10Z" stroke="#1010f0" strokeWidth="6" />
      </>
    ),
  },
  {
    label: "Ruler",
    tone: "white",
    art: <path d="M8 46H84V56H8ZM8 34H11V46H8ZM16 38H19V46H16ZM24 34H27V46H24ZM32 38H35V46H32ZM40 34H43V46H40ZM48 38H51V46H48ZM56 34H59V46H56ZM64 38H67V46H64ZM72 34H75V46H72ZM81 34H84V46H81Z" fill={K} />,
  },
  {
    label: "Select feature",
    tone: "white",
    art: (
      <>
        <path d="M14 12H78V78H14Z" stroke={K} strokeWidth="3" strokeDasharray="6 4" />
        <path d="M36 26H54L66 38V56L54 68H36L24 56V38Z" fill={K} />
      </>
    ),
  },
  blank("Add feature", "grey"),
  {
    label: "Delete feature",
    tone: "grey",
    art: (
      <>
        <circle cx="45" cy="46" r="14" fill="#101880" />
        <path d="M24 26L66 66M64 26L26 66" stroke={K} strokeWidth="5" />
      </>
    ),
  },
  {
    label: "Copy feature",
    tone: "grey",
    art: (
      <>
        <circle cx="22" cy="67" r="11" stroke="#1010f0" strokeWidth="6" />
        <circle cx="68" cy="22" r="14" fill="#f41010" />
        <path d="M36 56L54 38M44 38H55V48" stroke={K} strokeWidth="3" />
      </>
    ),
  },
  {
    label: "Move feature",
    tone: "grey",
    art: (
      <>
        <circle cx="22" cy="67" r="14" fill="#1010f0" />
        <circle cx="68" cy="22" r="14" fill="#f41010" />
        <path d="M36 56L54 38M44 38H55V48" stroke={K} strokeWidth="3" />
      </>
    ),
  },
  blank("Resize", "grey"),
  {
    label: "Stretch line",
    tone: "grey",
    art: (
      <>
        <path d="M16 68L45 40" stroke="#1010f0" strokeWidth="7" />
        <path d="M44 41L70 16" stroke="#f01010" strokeWidth="7" />
        <path d="M48 62L58 52M50 52H59V60" stroke={K} strokeWidth="3" />
      </>
    ),
  },
  { label: "Rotate", tone: "grey", art: <><path d="M42 22C66 28 66 58 38 63" stroke={K} strokeWidth="4" /><path d="M30 62L42 55V70Z" fill={K} /></> },
  {
    label: "Mirror",
    tone: "grey",
    art: (
      <>
        <path d="M46 8V80" stroke={K} strokeWidth="3" />
        <path d="M10 20H38V70M38 42H18" stroke="#1010f0" strokeWidth="7" />
        <path d="M84 20H58V70M58 42H78" stroke="#f01010" strokeWidth="7" />
      </>
    ),
  },
  blank("Break line", "grey"),
  {
    label: "Merge",
    tone: "grey",
    art: (
      <>
        <path d="M16 43H74" stroke="#f01010" strokeWidth="9" strokeLinecap="round" />
        <path d="M36 43H54" stroke="#1010f0" strokeWidth="9" />
      </>
    ),
  },
  {
    label: "Spread",
    tone: "grey",
    art: (
      <>
        <path d="M12 12V80M78 12V80" stroke={K} strokeWidth="3" />
        <path d="M14 46H34M56 46H76M22 40L15 46 22 52M68 40L75 46 68 52M34 33H56V58H34ZM50 40H40V48H50V53H40M45 36V55" stroke="#1010f0" strokeWidth="3" />
      </>
    ),
  },
  {
    label: "Contour operations",
    tone: "grey",
    art: (
      <>
        <path d="M12 18H56V40H80V78H40V68H12Z" fill="#1414f0" />
        <circle cx="30" cy="35" r="10" fill="#ccc" />
        <circle cx="58" cy="60" r="14" fill="#ccc" />
      </>
    ),
  },
  blank("Chamfer", "grey"),
  {
    label: "Shift vertex",
    tone: "grey",
    art: (
      <>
        <path d="M8 88L42 10 78 88" stroke="#e02020" strokeWidth="5" />
        <path d="M14 88L42 56 72 88" stroke="#1010f0" strokeWidth="5" />
        <path d="M42 50V38M36 42L42 36 48 42" stroke={K} strokeWidth="3" />
      </>
    ),
  },
  {
    label: "Shift segment",
    tone: "grey",
    art: (
      <>
        <path d="M20 58L34 20H56L72 58" stroke="#e02020" strokeWidth="7" />
        <path d="M4 88L14 60H76L86 88" stroke="#1010f0" strokeWidth="6" />
        <path d="M44 50V34M38 40L44 34 50 40" stroke={K} strokeWidth="3" />
      </>
    ),
  },
  {
    label: "Shift with snap",
    tone: "grey",
    art: (
      <>
        <path d="M20 56L34 20H56L72 56" stroke="#e02020" strokeWidth="7" />
        <path d="M2 62H88" stroke="#1010f0" strokeWidth="6" />
        <path d="M44 50V34M38 40L44 34 50 40M8 52L26 72M26 52L8 72M66 52L84 72M84 52L66 72" stroke={K} strokeWidth="3" />
      </>
    ),
  },
  blank("Single select", "orange"),
  { label: "Window select", tone: "orange", art: <><path d="M14 14H74V74H14Z" stroke="#f02010" strokeWidth="6" /><path d={cursor} fill={K} /></> },
  { label: "Polygon select", tone: "orange", art: <><path d="M32 14H72V74H30L14 58V34Z" stroke="#f02010" strokeWidth="5" /><path d={cursor} fill={K} /></> },
  {
    label: "Net select",
    tone: "orange",
    art: (
      <>
        <path d="M19 4V48M16 73H38V46H50V22H70" stroke={K} strokeWidth="3" />
        <circle cx="19" cy="50" r="6" fill="#c01010" stroke={K} strokeWidth="2" />
        <circle cx="16" cy="74" r="6" fill="#20d020" stroke={K} strokeWidth="2" />
        <circle cx="71" cy="22" r="6" fill="#20d020" stroke={K} strokeWidth="2" />
        <path d="M56 38L78 52 70 57 82 78 75 82 62 62 58 70Z" fill={K} />
      </>
    ),
  },
];

const TONES: Record<Tool["tone"], string> = {
  aqua: AQUA,
  alert: "bg-[#9cdbdc] border-[#e01818]",
  white: "bg-white border-t-white border-l-white border-b-[#909090] border-r-[#909090]",
  grey: "bg-[#cccccc] border-t-[#ececec] border-l-[#ececec] border-b-[#808080] border-r-[#808080]",
  orange: "bg-[#fec64f] border-t-[#ffe9b4] border-l-[#ffe9b4] border-b-[#a27a28] border-r-[#a27a28]",
};

function ToolGrid({ tools }: { tools: Tool[] }) {
  return (
    <div className="grid grid-cols-4 gap-[2px] bg-black p-px">
      {tools.map((t) => (
        <button type="button" key={t.label} aria-label={t.label} title={t.label} className={`flex h-[38px] items-center justify-center border-3 ${TONES[t.tone]}`}>
          <svg className="h-[30px] w-[30px]" viewBox="0 0 90 90" fill="none">
            {t.art}
            <path d="M1.500 1.500H88.500V88.500H1.500Z" stroke="#000" strokeWidth="3" />
          </svg>
        </button>
      ))}
    </div>
  );
}

function ToolPanel() {
  return (
    <aside className="flex w-[164px] shrink-0 flex-col border-l-2 border-[#33705f] bg-[#33705f] pt-px">
      <div className="pr-[2px]">
        <ToolGrid tools={NAV_TOOLS} />
      </div>
      <div className="h-1 border-t-2 border-[#b5f0ee] bg-[#707070]" />
      <div className="bg-[#707070] pr-[2px]">
        <ToolGrid tools={EDIT_TOOLS} />
      </div>
      <div className="h-[3px] bg-[#707070]" />
      <div className="mt-[3px] flex-1 border-r-2 border-b-2 border-[#b5f0e0] bg-black">
        <svg className="h-[264px] w-[160px]" viewBox="1278 486 160 264" role="img" aria-label="Overview">
          <path d="M1278.500 546.500H1440V687.500H1278.500Z" fill="#f00" stroke="#c07818" />
          <path d="M1288 607V681M1428 607V681" stroke="#b4b4b4" strokeWidth="2" />
          <path d="M1287 607H1429M1287 681H1429" stroke="#3fe0e0" strokeWidth="2" />
          <path d="M1285 678L1292 685M1292 678L1285 685M1288 677V686" stroke="#a8c8c8" />
        </svg>
      </div>
      <div className={`${MONO} h-[43px] border-t-2 border-b border-t-[#33705f] border-b-[#b5f0e0] bg-[#53cdac] pt-1 pl-[3px] text-[15px] leading-[15px] font-bold`}>
        <div>X = 9.478321"</div>
        <div>Y = 13.987016"</div>
      </div>
      <div className="h-[2px] bg-black" />
    </aside>
  );
}

/* ---------- pop-up views ---------- */

const POP_TOOLS: [string, ReactNode][] = [
  ["Copy view", <><path d="M9 18H33V46H9Z" stroke="#000" strokeWidth="5" /><path d="M41 7H55V21H41ZM49 21V32H16M22 25L15 32 22 39" stroke="#000" strokeWidth="3" /></>],
  ["View up", <><path d="M8 27H55V53H8Z" stroke="#000" strokeWidth="6" /><path d="M31 6L46 22H40V36H22V22H16Z" fill="#000" /></>],
  ["View down", <><path d="M9 9H54V35H9Z" stroke="#000" strokeWidth="6" /><path d="M31 58L46 42H40V28H22V42H16Z" fill="#000" /></>],
  ["View left", <><path d="M27 9H54V54H27Z" stroke="#000" strokeWidth="6" /><path d="M4 31L20 16V22H36V40H20V46Z" fill="#000" /></>],
  ["View right", <><path d="M9 9H36V54H9Z" stroke="#000" strokeWidth="6" /><path d="M59 31L43 16V22H27V40H43V46Z" fill="#000" /></>],
  ["View zoom in", <><path d="M24 24H39V39H24Z" stroke="#000" strokeWidth="5" /><path d="M15 3H48L31 17ZM15 60H48L31 46ZM3 15V47L19 31ZM60 15V47L44 31Z" fill="#000" /></>],
  ["View zoom out", <><path d="M25 25H38V38H25Z" stroke="#000" strokeWidth="3" /><path d="M19 16H44L31 3ZM19 47H44L31 60ZM16 18V44L3 31ZM47 18V44L60 31Z" fill="#000" /></>],
];

function Popview({ title, place, bar, children }: { title: string; place: string; bar: string; children: ReactNode }) {
  return (
    <section
      aria-label={title}
      className={`absolute flex flex-col border-2 border-t-[#f0eeea] border-l-[#f0eeea] border-r-[#606060] border-b-[#606060] bg-[#d4d0c8] p-px ${place}`}
    >
      <div className={`flex h-[18px] shrink-0 items-center gap-[2px] pr-[2px] pl-[2px] font-['Inter',sans-serif] text-[11px] leading-4 font-bold ${bar}`}>
        <AppIcon />
        <span className="flex-1">{title}</span>
        <WinButton label={"Close " + title}>{CloseGlyph}</WinButton>
      </div>
      <div className="mt-px flex min-h-0 flex-1">
        <div className="min-w-0 flex-1 overflow-hidden border-t-3 border-r-2 border-b-2 border-l-3 border-t-[#33705f] border-r-[#b5f0e0] border-b-[#b5f0e0] border-l-[#33705f] bg-black">
          {children}
        </div>
        <div className="flex w-[37px] flex-col gap-[2px] border-x-2 border-black bg-black pt-[2px]">
          {POP_TOOLS.map(([label, art]) => (
            <button type="button" key={label} aria-label={label} className="flex h-[33px] items-center justify-center bg-[#53cdac]">
              <span className={`flex h-[31px] w-[29px] items-center justify-center border-3 ${AQUA}`}>
                <svg className="h-[21px] w-[21px]" viewBox="0 0 63 63" fill="none">
                  {art}
                  <path d="M1.500 1.500H61.500V61.500H1.500Z" stroke="#000" strokeWidth="3" />
                </svg>
              </span>
            </button>
          ))}
          <div className="-mx-px flex-1 bg-[#53cdac]" />
        </div>
      </div>
      <div className="mt-px flex h-[29px] shrink-0 border border-black bg-[#53cdac] p-px">
        <button type="button" className={`${MONO} ${AQUA} h-[25px] w-full border-2 text-[15px] leading-5 font-bold`}>
          Close
        </button>
      </div>
    </section>
  );
}

function PadView() {
  return (
    <svg className="h-[444px] w-[568px]" viewBox="158 95 568 444" role="img" aria-label="Pad detail">
      <path
        d="M181.500 141Q181.500 132.500 189 132.500H378L392 135 412 139 430 146 448 157 464 173 476 190 485 209 490 232 490.500 240V435.500H726V520.500H187L181.500 514Z"
        fill={GOLD}
        stroke={GREEN}
      />
      <path d="M411 139L414 141H419L415 139ZM426 147L430 149 429 147ZM442 155L445 157ZM474 188L476 191ZM486 218L488 223V219ZM488 235L490 239V235Z" fill="#f00" stroke="#f00" />
    </svg>
  );
}

function SectionView() {
  return (
    <svg className="h-[378px] w-[394px]" viewBox="875 192 394 378" role="img" aria-label="Pad row detail">
      <path d="M892 299H923V330H892ZM933 299H965V330H933ZM1115 299H1146V330H1115ZM1155 299H1187V330H1155Z" fill={GREEN} />
      <Holes list={[[920, 315, 5], [937, 315, 5], [1142, 315, 5], [1160, 315, 5]]} />
      <path d="M891 361H995V377H891ZM1160 361H1269V377H1160Z" fill={GOLD} />
      <path d="M875 391.500H1269" stroke="#8c1810" />
      <path d="M875 392.500H1269" stroke="#3fd0d0" />
    </svg>
  );
}

/* ---------- prompt and status ---------- */

function PromptBar() {
  const box = "flex h-full w-[31px] shrink-0 items-center justify-center border-2 border-t-[#ffffee] border-l-[#ffffee] border-r-[#a8a888] border-b-[#a8a888] bg-[#ffffce]";
  return (
    <div className={`${MONO} flex h-[33px] gap-[2px] border-y-2 border-black bg-black pl-px text-[12px] font-bold`}>
      <button type="button" aria-label="Diagonal snap" className={box}>
        <svg className="h-5 w-5" viewBox="0 0 20 20" fill="none" stroke="#000" shapeRendering="crispEdges">
          <path d="M.5 .5h19v19h-19zM4 4l12 12M4 8V4h4M16 12v4h-4" />
        </svg>
      </button>
      <button type="button" aria-label="Absolute or relative" className={box}>
        <svg className="h-5 w-5" viewBox="0 0 20 20" fill="none" stroke="#000">
          <path d="M.5 .5h19v19h-19zM4 16L16 4M6 4v5h2M9 13.500h3v3h-3zM14 13v4M17 13l-3 2 3 2" />
        </svg>
      </button>
      <button type="button" aria-label="Grid" className="flex h-full w-[29px] items-center justify-center border-3 border-[#53cdac] bg-[#ffffce]">
        <svg className="h-[17px] w-[17px]" viewBox="0 0 17 17" fill="none" stroke="#000" shapeRendering="crispEdges">
          <path d="M.5 .5h16v16h-16zM3.500 14V7l4-4h6v11zM3 8.500h11M8.500 3v11" />
        </svg>
      </button>
      <label htmlFor="xy" className="-ml-[2px] flex w-[46px] shrink-0 items-center bg-[#ffffce] pl-[2px] whitespace-pre">
        X Y :
      </label>
      <input
        id="xy"
        type="text"
        placeholder="┊"
        className="h-full w-[171px] border-3 border-t-[#989878] border-l-[#989878] border-r-[#ffffee] border-b-[#ffffee] bg-[#ffffce] px-px placeholder:text-black"
      />
      <button type="button" aria-label="Confirm" className={box}>
        <span className="flex h-5 w-5 items-center justify-center border border-black text-[15px] leading-5">!</span>
      </button>
      <output className="flex flex-1 items-center bg-[#ffffce] pl-px">&lt;M1&gt; - Select first area corner</output>
      <div className="relative w-[78px] bg-[#53cdac] py-px pr-[2px] pl-[6px]">
        <select
          aria-label="Units"
          className="h-full w-full appearance-none border-2 border-t-[#b5f0e0] border-l-[#b5f0e0] border-r-[#33705f] border-b-[#33705f] bg-[#53cdac] pl-[3px] text-[15px] leading-5"
        >
          <option>Inch</option>
          <option>MM</option>
        </select>
        <span className="pointer-events-none absolute top-[11px] right-[10px] h-[7px] w-3 border-2 border-t-[#b5f0e0] border-l-[#b5f0e0] border-r-[#33705f] border-b-[#33705f]" />
      </div>
    </div>
  );
}

export default function App() {
  return (
    <div className="relative flex min-h-screen flex-col overflow-hidden bg-[#ffffce] text-[#0c1414]">
      <div className="flex h-[19px] items-center gap-[2px] border-b border-[#d4d0c8] bg-linear-to-r from-[#808080] to-[#c4c4c4] pr-[2px] pl-[2px] font-['Inter',sans-serif] text-[11px] leading-4 font-bold text-[#dedad2]">
        <AppIcon />
        <h1 className="flex-1">Graphic Editor 9.02c2 (00@HY-P2QAE-PC13 - Windows, pid:1944)</h1>
        <div className="flex">
          <WinButton label="Minimize">
            <path d="M2 8h5M2 7h5" />
          </WinButton>
          <WinButton label="Restore">
            <path d="M4.500 3V1h5v5H8M4 1.500h6M2.500 4.500h5v4h-5zM2 4h6" />
          </WinButton>
        </div>
        <WinButton label="Close">{CloseGlyph}</WinButton>
      </div>
      <Header />
      <div className="flex h-[721px] bg-black">
        <Sidebar />
        <main className="min-w-0 flex-1 overflow-hidden bg-black">
          <Board />
        </main>
        <ToolPanel />
      </div>
      <PromptBar />
      <div className="border-t-2 border-[#477f80] bg-[#d8fffb] pr-[2px] pl-[2px]">
        <div className="border border-black bg-[#d8fffb] p-px">
          <div className={`${MONO} h-[25px] overflow-hidden border-2 border-t-[#dcffff] border-l-[#dcffff] border-r-[#5f9ea0] border-b-[#5f9ea0] bg-[#b3fffe] text-center text-[12px] leading-[21px] font-bold whitespace-nowrap`}>
            rout.d,#3,Line,XS=14.96063,YS=0.0787401,XE=14.96063,YE=7.7952701,r0.394,POS,Ang=-90
          </div>
        </div>
      </div>
      <div className="mt-auto h-[3px] border-t border-[#a8a8a0] bg-[#d4d0c8]" />

      <Popview
        title="Popview - 1"
        place="left-[152px] top-[70px] h-[504px] w-[617px]"
        bar="bg-linear-to-r from-[#808080] to-[#c0c0c0] text-[#dedad2]"
      >
        <PadView />
      </Popview>
      <Popview
        title="Popview - 2"
        place="left-[869px] top-[167px] h-[440px] w-[442px]"
        bar="bg-linear-to-r from-[#0a246a] to-[#a6caf0] text-white"
      >
        <SectionView />
      </Popview>
    </div>
  );
}
